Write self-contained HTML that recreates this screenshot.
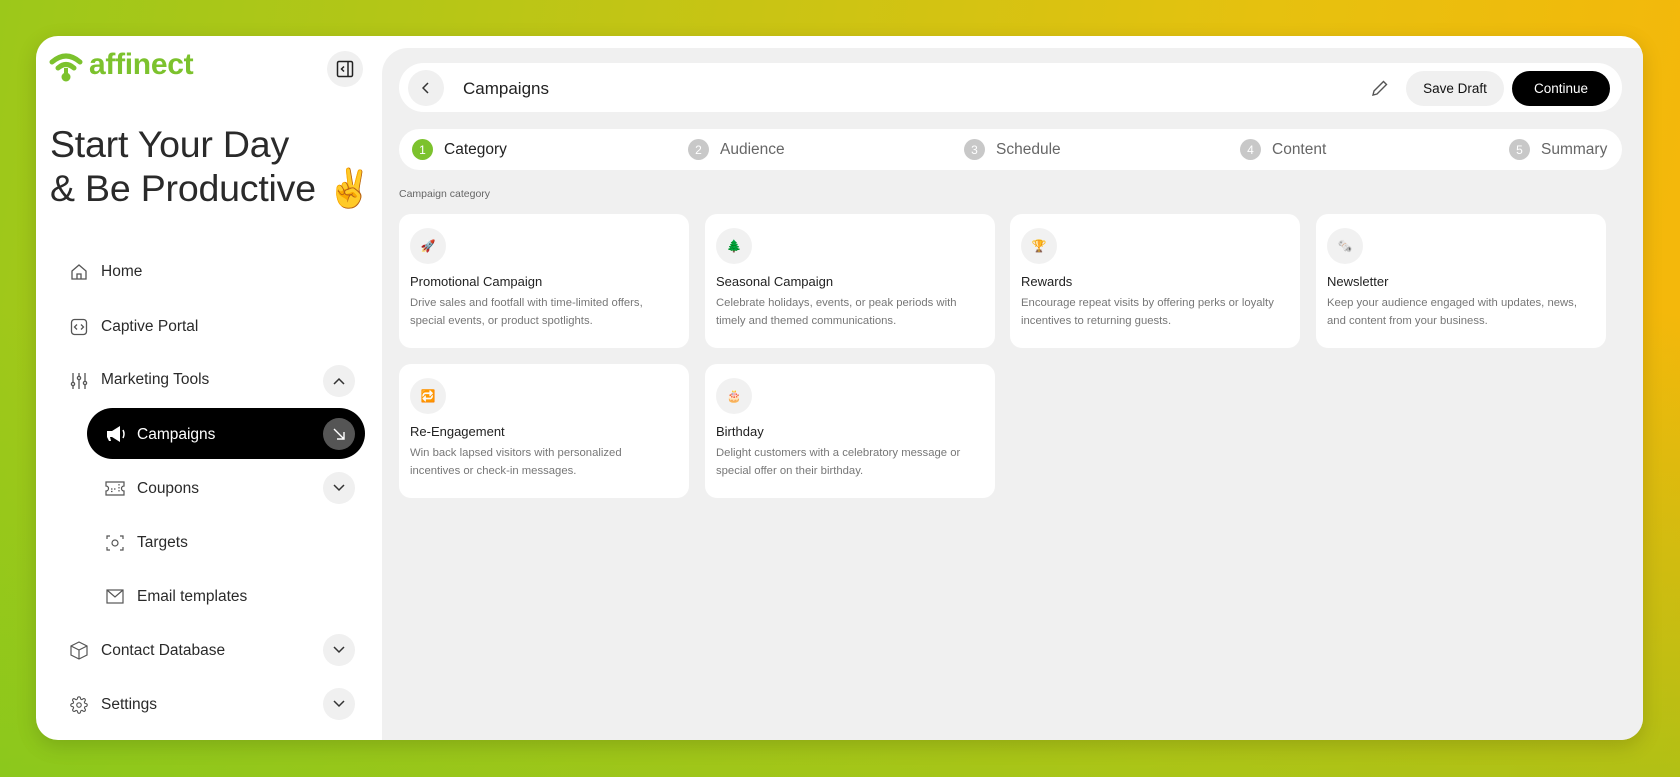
<!DOCTYPE html>
<html><head><meta charset="utf-8"><style>
*{margin:0;padding:0;box-sizing:border-box}
body{width:1680px;height:777px;overflow:hidden;font-family:"Liberation Sans",sans-serif;background:linear-gradient(100deg,#9cc81a 0%,#c2c515 35%,#e6c10f 70%,#f7b60a 100%);position:relative;color:#222}
.bgl{position:absolute;inset:0;background:linear-gradient(to bottom,rgba(0,0,0,0) 40%,rgba(120,200,30,.55) 100%)}
.card{position:absolute;left:36px;top:36px;width:1607px;height:704px;background:#fff;border-radius:22px;box-shadow:0 6px 20px rgba(0,0,0,.15);overflow:hidden}
.main{position:absolute;left:346px;top:12px;right:0;bottom:0;background:#f0f0f0;border-radius:26px 0 0 0}
.abs{position:absolute}
.circ{position:absolute;border-radius:50%;background:#f0f0f0;display:flex;align-items:center;justify-content:center}
.nav{position:absolute;font-size:15.5px;color:#2a2a2a;display:flex;align-items:center}
.chev{width:32px;height:32px;left:287px}
.bar{position:absolute;background:#fff;border-radius:25px}
.step{position:absolute;display:flex;align-items:center;font-size:15.5px;color:#666}
.num{width:21px;height:21px;border-radius:50%;background:#c8c8c8;color:#fff;font-size:12px;display:flex;align-items:center;justify-content:center;margin-right:11px}
.tile{position:absolute;width:290px;height:134px;background:#fff;border-radius:12px}
.tile .ic{position:absolute;left:11px;top:14px;width:36px;height:36px;border-radius:50%;background:#f1f1f1;display:flex;align-items:center;justify-content:center;font-size:12px}
.tile h4{position:absolute;left:11px;top:60px;font-size:13px;font-weight:normal;color:#222}
.tile p{position:absolute;left:11px;top:81px;width:262px;font-size:11.3px;line-height:17.5px;color:#777}
</style></head><body>
<div class="bgl"></div>
<div class="card">
 <svg class="abs" style="left:13px;top:15px" width="36" height="32" viewBox="0 0 36 32"><path d="M3 11 Q17 -1 31 11" stroke="#7cc22d" stroke-width="5" fill="none" stroke-linecap="round"/><path d="M9 17 Q17 10 25 17" stroke="#7cc22d" stroke-width="5" fill="none" stroke-linecap="round"/><circle cx="17" cy="26" r="4.5" fill="#7cc22d"/><rect x="15" y="17" width="4" height="8" fill="#7cc22d"/></svg>
 <div class="abs" style="left:53px;top:12px;font-size:30px;font-weight:bold;color:#7cc22d;letter-spacing:-.3px">affinect</div>
 <div class="circ" style="left:291px;top:15px;width:36px;height:36px"><svg width="18" height="18" viewBox="0 0 18 18" fill="none" stroke="#222" stroke-width="1.5"><rect x="1.5" y="1.5" width="15" height="15" rx="1.5"/><path d="M12 1.5v15M8 6.5 5.5 9 8 11.5"/></svg></div>
 <div class="abs" style="left:14px;top:86px;font-size:37.5px;line-height:44px;color:#2a2a2a;letter-spacing:-.2px">Start Your Day<br>&amp; Be Productive ✌️</div>

 <svg class="abs" style="left:34px;top:227px" width="18" height="18" viewBox="0 0 18 18" fill="none" stroke="#555" stroke-width="1.3"><path d="M2 8 9 2l7 6v8H2z"/><path d="M7 16v-5h4v5"/></svg>
 <div class="nav" style="left:65px;top:227px">Home</div>
 <svg class="abs" style="left:34px;top:282px" width="18" height="18" viewBox="0 0 18 18" fill="none" stroke="#555" stroke-width="1.3"><rect x="1.5" y="1.5" width="15" height="15" rx="3"/><path d="M7 6.5 4.5 9 7 11.5M11 6.5 13.5 9 11 11.5"/></svg>
 <div class="nav" style="left:65px;top:282px">Captive Portal</div>
 <svg class="abs" style="left:34px;top:336px" width="18" height="18" viewBox="0 0 18 18" fill="none" stroke="#555" stroke-width="1.3"><path d="M3 1v16M9 1v16M15 1v16"/><circle cx="3" cy="12" r="1.6" fill="#fff"/><circle cx="9" cy="6" r="1.6" fill="#fff"/><circle cx="15" cy="11" r="1.6" fill="#fff"/></svg>
 <div class="nav" style="left:65px;top:335px">Marketing Tools</div>
 <div class="circ chev" style="top:329px"><svg width="12" height="8" viewBox="0 0 12 8" fill="none" stroke="#333" stroke-width="1.5"><path d="M1 7 6 2l5 5"/></svg></div>

 <div class="abs" style="left:51px;top:372px;width:278px;height:51px;background:#000;border-radius:26px"></div>
 <svg class="abs" style="left:70px;top:389px" width="20" height="18" viewBox="0 0 20 18"><path d="M1 6h5l8-5v16L6 12H4l1 4H3L1 12z" fill="#fff"/><path d="M17 5q2 4 0 8" stroke="#fff" stroke-width="1.5" fill="none"/></svg>
 <div class="nav" style="left:101px;top:390px;color:#fff">Campaigns</div>
 <div class="circ" style="left:287px;top:382px;width:32px;height:32px;background:#555"><svg width="14" height="14" viewBox="0 0 14 14" fill="none" stroke="#fff" stroke-width="1.4"><path d="M2 2l10 10M12 5v7H5"/></svg></div>

 <svg class="abs" style="left:69px;top:445px" width="20" height="15" viewBox="0 0 20 15" fill="none" stroke="#555" stroke-width="1.2"><path d="M1 1h18v4a2.5 2.5 0 0 0 0 5v4H1v-4a2.5 2.5 0 0 0 0-5z"/><path d="M6 8h5M6 10.5h3M14 3v9" stroke-dasharray="1.5 1.5"/></svg>
 <div class="nav" style="left:101px;top:444px">Coupons</div>
 <div class="circ chev" style="top:436px"><svg width="12" height="8" viewBox="0 0 12 8" fill="none" stroke="#333" stroke-width="1.5"><path d="M1 1l5 5 5-5"/></svg></div>

 <svg class="abs" style="left:70px;top:498px" width="18" height="18" viewBox="0 0 18 18" fill="none" stroke="#555" stroke-width="1.2"><path d="M1 5V2h3M14 2h3v3M17 13v3h-3M4 16H1v-3"/><circle cx="9" cy="9" r="3"/></svg>
 <div class="nav" style="left:101px;top:498px">Targets</div>
 <svg class="abs" style="left:70px;top:553px" width="18" height="15" viewBox="0 0 18 15" fill="none" stroke="#555" stroke-width="1.2"><rect x="1" y="1" width="16" height="13"/><path d="M1 1l8 7 8-7"/></svg>
 <div class="nav" style="left:101px;top:552px">Email templates</div>

 <svg class="abs" style="left:34px;top:605px" width="18" height="19" viewBox="0 0 18 19" fill="none" stroke="#555" stroke-width="1.2"><path d="M9 1l8 4v9l-8 4-8-4V5z"/><path d="M1 5l8 4 8-4M9 9v9"/></svg>
 <div class="nav" style="left:65px;top:606px">Contact Database</div>
 <div class="circ chev" style="top:598px"><svg width="12" height="8" viewBox="0 0 12 8" fill="none" stroke="#333" stroke-width="1.5"><path d="M1 1l5 5 5-5"/></svg></div>
 <svg class="abs" style="left:34px;top:660px" width="18" height="18" viewBox="0 0 24 24" fill="none" stroke="#555" stroke-width="1.5"><circle cx="12" cy="12" r="3"/><path d="M19.4 15a1.7 1.7 0 0 0 .3 1.8l.1.1a2 2 0 1 1-2.8 2.8l-.1-.1a1.7 1.7 0 0 0-1.8-.3 1.7 1.7 0 0 0-1 1.5V21a2 2 0 1 1-4 0v-.1a1.7 1.7 0 0 0-1.100-1.5 1.7 1.7 0 0 0-1.8.3l-.1.1a2 2 0 1 1-2.8-2.8l.1-.1a1.7 1.7 0 0 0 .3-1.8 1.7 1.7 0 0 0-1.5-1H3a2 2 0 1 1 0-4h.1a1.7 1.7 0 0 0 1.5-1.1 1.7 1.7 0 0 0-.3-1.8l-.1-.1a2 2 0 1 1 2.8-2.8l.1.1a1.7 1.7 0 0 0 1.8.3H9a1.7 1.7 0 0 0 1-1.5V3a2 2 0 1 1 4 0v.1a1.7 1.7 0 0 0 1 1.5 1.7 1.7 0 0 0 1.8-.3l.1-.1a2 2 0 1 1 2.8 2.8l-.1.1a1.7 1.7 0 0 0-.3 1.8V9a1.7 1.7 0 0 0 1.5 1H21a2 2 0 1 1 0 4h-.1a1.7 1.7 0 0 0-1.5 1z"/></svg>
 <div class="nav" style="left:65px;top:660px">Settings</div>
 <div class="circ chev" style="top:652px"><svg width="12" height="8" viewBox="0 0 12 8" fill="none" stroke="#333" stroke-width="1.5"><path d="M1 1l5 5 5-5"/></svg></div>

 <div class="main">
  <div class="bar" style="left:17px;top:15px;width:1223px;height:49px"></div>
  <div class="circ" style="left:26px;top:22px;width:36px;height:36px"><svg width="8" height="12" viewBox="0 0 8 12" fill="none" stroke="#333" stroke-width="1.5"><path d="M6 1 1 6l5 5"/></svg></div>
  <div class="abs" style="left:81px;top:31px;font-size:17px;color:#222">Campaigns</div>
  <svg class="abs" style="left:989px;top:31px" width="18" height="18" viewBox="0 0 18 18" fill="none" stroke="#555" stroke-width="1.4"><path d="M12.5 2.5l3 3L6 15l-4 1 1-4z"/></svg>
  <div class="abs" style="left:1024px;top:23px;width:98px;height:35px;border-radius:18px;background:#f0f0f0;font-size:13.5px;display:flex;align-items:center;justify-content:center;color:#111">Save Draft</div>
  <div class="abs" style="left:1130px;top:23px;width:98px;height:35px;border-radius:18px;background:#000;color:#fff;font-size:13.5px;display:flex;align-items:center;justify-content:center">Continue</div>

  <div class="bar" style="left:17px;top:81px;width:1223px;height:41px;border-radius:21px"></div>
  <div class="step" style="left:30px;top:91px;color:#222"><span class="num" style="background:#7cc22d">1</span>Category</div>
  <div class="step" style="left:306px;top:91px"><span class="num">2</span>Audience</div>
  <div class="step" style="left:582px;top:91px"><span class="num">3</span>Schedule</div>
  <div class="step" style="left:858px;top:91px"><span class="num">4</span>Content</div>
  <div class="step" style="left:1127px;top:91px"><span class="num">5</span>Summary</div>

  <div class="abs" style="left:17px;top:140px;font-size:10.5px;color:#666">Campaign category</div>

  <div class="tile" style="left:17px;top:166px"><div class="ic">🚀</div><h4>Promotional Campaign</h4><p>Drive sales and footfall with time-limited offers, special events, or product spotlights.</p></div>
  <div class="tile" style="left:323px;top:166px"><div class="ic">🌲</div><h4>Seasonal Campaign</h4><p>Celebrate holidays, events, or peak periods with timely and themed communications.</p></div>
  <div class="tile" style="left:628px;top:166px"><div class="ic">🏆</div><h4>Rewards</h4><p>Encourage repeat visits by offering perks or loyalty incentives to returning guests.</p></div>
  <div class="tile" style="left:934px;top:166px"><div class="ic">🗞️</div><h4>Newsletter</h4><p>Keep your audience engaged with updates, news, and content from your business.</p></div>
  <div class="tile" style="left:17px;top:316px"><div class="ic">🔁</div><h4>Re-Engagement</h4><p style="width:240px">Win back lapsed visitors with personalized incentives or check-in messages.</p></div>
  <div class="tile" style="left:323px;top:316px"><div class="ic">🎂</div><h4>Birthday</h4><p>Delight customers with a celebratory message or special offer on their birthday.</p></div>
 </div>
</div>
</body></html>
